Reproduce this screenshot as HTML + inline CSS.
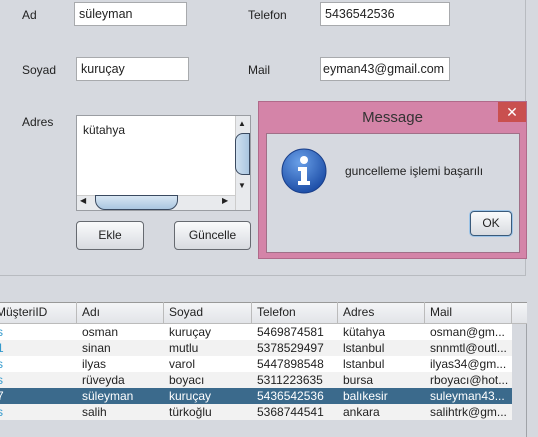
<!DOCTYPE html>
<html><head><meta charset="utf-8"><style>
*{box-sizing:border-box;margin:0;padding:0}
body{width:538px;height:437px;background:#d6d9df;font-family:"Liberation Sans",Arial,sans-serif;font-size:12px;color:#222;position:relative;overflow:hidden}
.a{position:absolute}
.lbl{position:absolute;font-size:12px;color:#222}
.tf{position:absolute;background:#fff;border:1px solid #a8aaad;height:24px;padding:4px 4px;font-size:12.5px;white-space:nowrap;overflow:hidden}
.btn{position:absolute;border:1px solid #666a70;border-radius:4px;background:linear-gradient(#fafbfc,#d8dbe0);text-align:center;font-size:12px;line-height:26px}
table{border-collapse:collapse;font-size:12px}
td{height:16px;padding:0 0 0 5px;white-space:nowrap;overflow:hidden}
.h div{border-right:1px solid #bbb;padding-left:5px}
</style></head><body>
<div class="a" style="left:0;top:0;width:526px;height:276px;border-right:1px solid #b8bbc0;border-bottom:1px solid #b8bbc0"></div>
<div class="lbl" style="left:22px;top:8px">Ad</div>
<div class="tf" style="left:74px;top:2px;width:113px">süleyman</div>
<div class="lbl" style="left:248px;top:8px">Telefon</div>
<div class="tf" style="left:320px;top:2px;width:130px">5436542536</div>
<div class="lbl" style="left:22px;top:63px">Soyad</div>
<div class="tf" style="left:76px;top:57px;width:113px">kuruçay</div>
<div class="lbl" style="left:248px;top:63px">Mail</div>
<div class="tf" style="left:320px;top:57px;width:130px;padding-left:2px">eyman43@gmail.com</div>
<div class="lbl" style="left:22px;top:115px">Adres</div>
<div class="a" style="left:76px;top:115px;width:175px;height:96px;border:1px solid #9a9da2;background:#fff"></div>
<div class="a" style="left:83px;top:123px;font-size:12px">kütahya</div>
<div class="a" style="left:235px;top:116px;width:15px;height:94px;background:#e8eaed;border-left:1px solid #ccc"></div>
<div class="a" style="left:235px;top:133px;width:15px;height:42px;border:1px solid #3a4a60;border-radius:8px 0 0 8px;background:linear-gradient(90deg,#cfe0f0,#aac6e0)"></div>
<div class="a" style="left:238px;top:119px;font-size:8px">▲</div>
<div class="a" style="left:238px;top:181px;font-size:8px">▼</div>
<div class="a" style="left:77px;top:195px;width:158px;height:15px;background:#e8eaed;border-top:1px solid #ccc"></div>
<div class="a" style="left:95px;top:195px;width:83px;height:15px;border:1px solid #3a4a60;border-radius:0 0 10px 10px;background:linear-gradient(#d8e6f3,#aac6e0)"></div>
<div class="a" style="left:80px;top:196px;font-size:8px">◀</div>
<div class="a" style="left:222px;top:196px;font-size:8px">▶</div>
<div class="btn" style="left:76px;top:221px;width:68px;height:29px">Ekle</div>
<div class="btn" style="left:174px;top:221px;width:77px;height:29px">Güncelle</div>

<div class="a" style="left:258px;top:101px;width:269px;height:158px;background:#d484a8;border:1px solid #b06a8a"></div>
<div class="a" style="left:258px;top:109px;width:269px;text-align:center;font-size:15px;color:#333">Message</div>
<div class="a" style="left:498px;top:102px;width:28px;height:20px;background:#c9504f;color:#fff;text-align:center;font-size:14px;line-height:20px">✕</div>
<div class="a" style="left:266px;top:133px;width:254px;height:120px;background:#d6d9e0;border:1px solid #a07088"></div>
<svg class="a" style="left:281px;top:148px" width="46" height="46"><defs><radialGradient id="g" cx="40%" cy="30%" r="70%"><stop offset="0" stop-color="#6aa0e8"/><stop offset="1" stop-color="#1e4fa8"/></radialGradient></defs><circle cx="23" cy="23" r="22" fill="url(#g)" stroke="#1a3f8a"/><circle cx="23" cy="12" r="4" fill="#fff"/><path d="M17 19h9v14h3v4H17v-4h3v-10h-3z" fill="#fff"/></svg>
<div class="a" style="left:345px;top:164px;font-size:12px">guncelleme işlemi başarılı</div>
<div class="btn" style="left:470px;top:211px;width:42px;height:25px;line-height:23px;border-color:#3a5a7a;box-shadow:0 0 0 1px #9cc4e8">OK</div>

<div class="a" style="left:0;top:302px;width:527px;height:135px;background:#d6d9df;border-right:1px solid #a0a3a8"></div>
<div class="a" style="left:0;top:302px;width:527px;height:22px;background:linear-gradient(#f4f5f7,#e2e4e8);border-top:1px solid #999;border-bottom:1px solid #bbb"></div>
<div class="a h" style="left:0;top:302px;height:22px;font-size:12px;line-height:20px;display:flex">
<div style="width:77px;padding-left:0;text-indent:-4px;overflow:hidden">MüşteriID</div>
<div style="width:87px">Adı</div>
<div style="width:88px">Soyad</div>
<div style="width:86px">Telefon</div>
<div style="width:87px">Adres</div>
<div style="width:87px">Mail</div>
</div>
<table class="a" style="left:0;top:324px;width:512px;table-layout:fixed">
<colgroup><col style="width:77px"><col style="width:87px"><col style="width:88px"><col style="width:86px"><col style="width:87px"><col style="width:87px"></colgroup>
<tr style="background:#fff"><td style="color:#39c;padding-left:0;text-indent:-3px">s</td><td>osman</td><td>kuruçay</td><td>5469874581</td><td>kütahya</td><td>osman@gm...</td></tr>
<tr style="background:#f2f2f2"><td style="color:#39c;padding-left:0;text-indent:-3px">1</td><td>sinan</td><td>mutlu</td><td>5378529497</td><td>lstanbul</td><td>snnmtl@outl...</td></tr>
<tr style="background:#fff"><td style="color:#39c;padding-left:0;text-indent:-3px">s</td><td>ilyas</td><td>varol</td><td>5447898548</td><td>lstanbul</td><td>ilyas34@gm...</td></tr>
<tr style="background:#f2f2f2"><td style="color:#39c;padding-left:0;text-indent:-3px">s</td><td>rüveyda</td><td>boyacı</td><td>5311223635</td><td>bursa</td><td>rboyacı@hot...</td></tr>
<tr style="background:#3b6a8c;color:#fff"><td style="padding-left:0;text-indent:-3px">7</td><td>süleyman</td><td>kuruçay</td><td>5436542536</td><td>balıkesir</td><td>suleyman43...</td></tr>
<tr style="background:#f2f2f2"><td style="color:#39c;padding-left:0;text-indent:-3px">s</td><td>salih</td><td>türkoğlu</td><td>5368744541</td><td>ankara</td><td>salihtrk@gm...</td></tr>
</table>
</body></html>
